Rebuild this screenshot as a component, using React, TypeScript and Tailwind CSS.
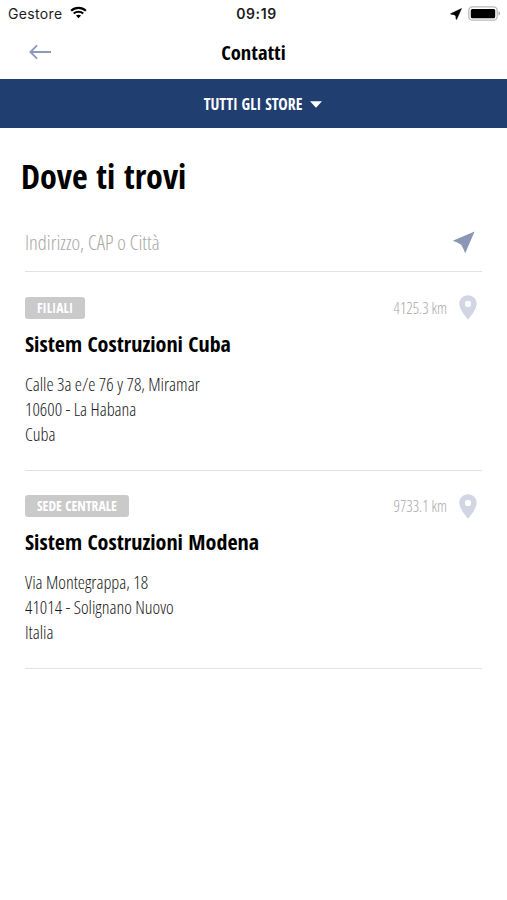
const bold = "font-['Open_Sans_Condensed','Open_Sans',sans-serif] font-bold";
const light = "font-['Open_Sans',sans-serif] font-light [font-stretch:75%]";

const stores = [
  { tag: "FILIALI", distance: "4125.3 km", name: "Sistem Costruzioni Cuba", lines: ["Calle 3a e/e 76 y 78, Miramar", "10600 - La Habana", "Cuba"] },
  { tag: "SEDE CENTRALE", distance: "9733.1 km", name: "Sistem Costruzioni Modena", lines: ["Via Montegrappa, 18", "41014 - Solignano Nuovo", "Italia"] },
];

function StatusBar() {
  return (
    <div className="grid h-[26px] grid-cols-3 items-center pt-[2px] font-['Inter',sans-serif] text-[14px] leading-none text-[#1c1c1c]">
      <div className="flex items-center pl-2">
        <span className="tracking-[0.35px]">Gestore</span>
        <svg className="ml-[7px] -mt-[3px] h-[13px] w-[17px]" viewBox="0 0 18 13" fill="none" stroke="#000">
          <path d="M1.2 4.6C5.5.6 12.5.6 16.8 4.6" strokeWidth="2.3" />
          <path d="M4 7.6c2.8-2.5 7.2-2.5 10 0" strokeWidth="2.3" />
          <path d="M9 12.6 6.3 9.8c1.5-1.3 3.9-1.3 5.4 0z" fill="#000" stroke="none" />
        </svg>
      </div>
      <span className="pl-[6px] text-center font-semibold tracking-[0.6px]">09:19</span>
      <div className="-mt-[2px] flex items-center justify-end pr-[6px]">
        <svg className="mt-[1px] mr-[6px] h-[12px] w-[12px]" viewBox="0 0 12 12"><path d="M11.5.5 6.6 11.5Q5.8 11.3 5.8 8.2 5.3 6.4 2.6 6.4.8 6.5.5 5.8z" fill="#000" stroke="#000" strokeWidth=".5" strokeLinejoin="round" /></svg>
        <svg className="h-[15px] w-[33px]" viewBox="0 0 33 15">
          <rect x=".8" y=".8" width="28.4" height="13.4" rx="3.6" fill="#fff" stroke="#b9b9b9" strokeWidth="1.3" />
          <rect x="2.8" y="2.9" width="24.4" height="9.3" rx="1.5" fill="#000" />
          <path d="M30.6 5.3c1.7.6 1.7 3.8 0 4.4z" fill="#999" />
        </svg>
      </div>
    </div>
  );
}

function Pin() {
  return (
    <svg className="h-[25px] w-[18px]" viewBox="0 0 18 25">
      <path fillRule="evenodd" d="M9 .3C4 .3.3 4.1.3 8.8.3 15.1 9 24.7 9 24.7s8.7-9.6 8.7-15.9C17.7 4.1 14 .3 9 .3zm0 5.5a3.1 3.1 0 1 1 0 6.2 3.1 3.1 0 0 1 0-6.2z" fill="#d2d5e3" />
    </svg>
  );
}

export default function App() {
  return (
    <div className="flex h-[900px] w-[507px] flex-col overflow-hidden bg-white">
      <StatusBar />
      <header className="grid h-[53px] grid-cols-3 items-center pb-[2px]">
        <svg className="ml-[29px] h-[16px] w-[23px]" viewBox="0 0 23 16" fill="none" stroke="#8b9ab9" strokeWidth="1.9">
          <path d="M22 8H1.8M8 1.4 1.4 8 8 14.6" />
        </svg>
        <h1 className={`${bold} pt-[2px] text-center text-[20.5px] leading-none`}>Contatti</h1>
      </header>
      <button className={`${bold} flex h-[49px] shrink-0 items-center justify-center gap-[8px] bg-[#213e70] pl-[19px] text-[15.8px] text-white`}>
        <span className="pt-[2px]">TUTTI GLI STORE</span>
        <svg className="mt-[1px] h-[7px] w-[12px]" viewBox="0 0 12 7"><path d="M0 .3h12L6 6.7z" fill="#fff" /></svg>
      </button>
      <h2 className={`${bold} mt-[28px] pl-[21px] text-[34px] leading-[40px]`}>Dove ti trovi</h2>
      <main className="mx-[25px]">
        <div className="flex h-[76px] items-center justify-between border-b border-[#e2e2e2] pt-[17px] pr-[7px]">
          <span className={`${light} text-[20.5px] text-[#a8a8a8]`}>Indirizzo, CAP o Città</span>
          <svg className="h-[23px] w-[23px]" viewBox="0 0 23 23"><path d="M22.6.5 13.2 22.2Q11.4 17.4 9.2 13.7 5.4 11.3.8 9.7z" fill="#8997b5" /></svg>
        </div>
        {stores.map((s) => (
          <section key={s.tag} className="h-[198.5px] border-b border-[#e2e2e2] pt-[23px]">
            <div className="flex h-[25px] items-center justify-between pr-[5px]">
              <span className={`${bold} flex h-[22px] items-center rounded-[3px] bg-[#cacaca] px-[12px] pt-px text-[13.6px] text-white`}>{s.tag}</span>
              <div className="flex items-center gap-[12px]">
                <span className={`${light} pt-[2px] text-[15.7px] text-[#a8a8a8]`}>{s.distance}</span>
                <Pin />
              </div>
            </div>
            <h3 className={`${bold} mt-[7.5px] text-[22px] leading-[30px]`}>{s.name}</h3>
            <address className={`${light} mt-[14px] text-[18.2px] leading-[25px] text-[#1a1a1a] not-italic`}>
              {s.lines.map((l) => <p key={l}>{l}</p>)}
            </address>
          </section>
        ))}
      </main>
    </div>
  );
}
